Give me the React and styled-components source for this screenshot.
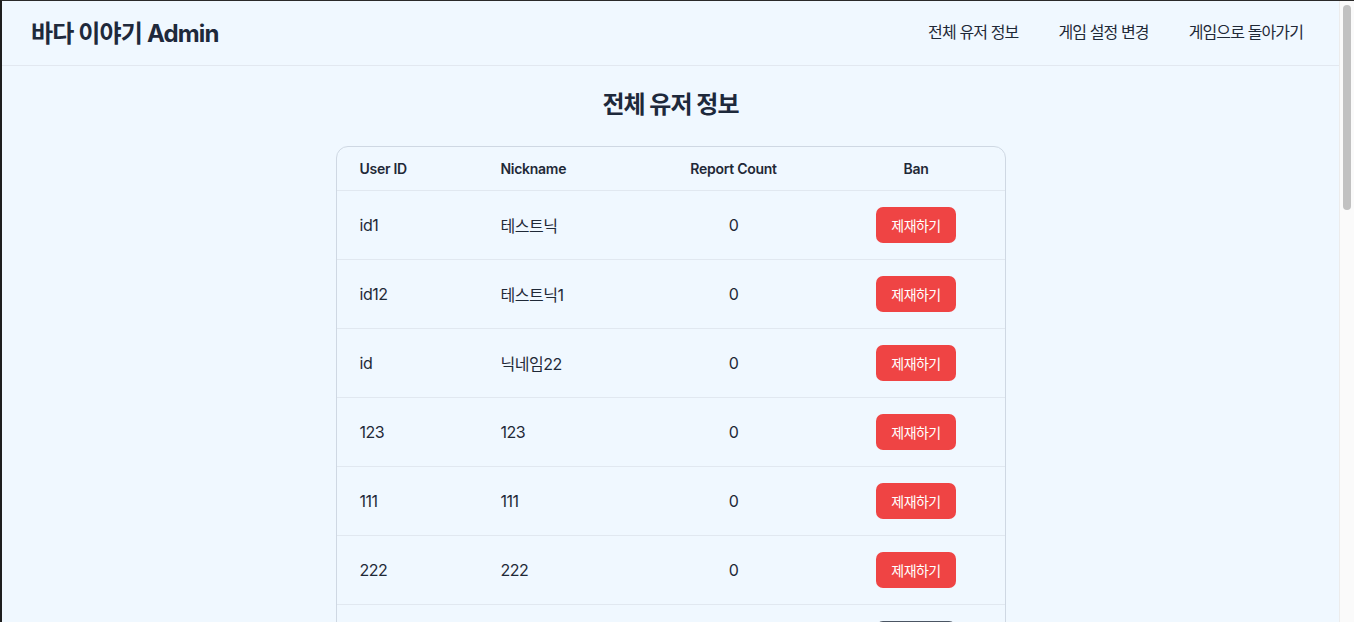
import React from "react";
import styled, { createGlobalStyle } from "styled-components";

const Global = createGlobalStyle`
  html { background: #262626; }
  body {
    margin: 0;
    border-top: 1px solid #2a2a2a;
    border-left: 2px solid #1e1e1e;
    padding-right: 15px;
    background: #f0f8ff;
    font-family: Inter, "Noto Sans CJK KR", sans-serif;
    color: #1f2937;
    overflow: hidden;
  }
  * { box-sizing: border-box; }
`;

const ScrollTrack = styled.div`
  position: fixed;
  top: 1px;
  right: 0;
  bottom: 0;
  width: 15px;
  background: #fafafa;
  border-left: 1px solid #ececec;
`;

const ScrollThumb = styled.div`
  margin: 4px 3px 0 3px;
  height: 205px;
  border-radius: 5px;
  background: #c1c1c1;
`;

const Header = styled.header`
  height: 65px;
  display: flex;
  align-items: center;
  justify-content: space-between;
  padding: 0 36px 4px 29px;
  border-bottom: 1px solid #e2e8f0;
`;

const Brand = styled.h1`
  margin: 0;
  font-size: 24px;
  font-weight: 700;
  letter-spacing: -0.035em;
  color: #1e293b;
`;

const Nav = styled.nav`
  display: flex;
  gap: 40px;
`;

const NavLink = styled.a`
  font-size: 16px;
  letter-spacing: -0.055em;
  color: #1f2937;
  text-decoration: none;
  cursor: pointer;
`;

const Main = styled.main`
  padding: 23px 0 40px;
`;

const Title = styled.h2`
  margin: 0 0 25px;
  text-align: center;
  font-size: 24px;
  font-weight: 700;
  line-height: 32px;
  letter-spacing: -0.04em;
  color: #1e293b;
`;

const Card = styled.div`
  width: 670px;
  margin: 0 auto;
  border: 1px solid #cfd8e3;
  border-radius: 12px;
  overflow: hidden;
`;

const Row = styled.div`
  display: grid;
  grid-template-columns: 141px 162px 188px 177px;
  align-items: center;
  height: ${(p) => (p.$head ? "44px" : "69px")};
  border-bottom: 1px solid #e1e8f0;
`;

const Cell = styled.div`
  padding: 0 23px;
  font-size: ${(p) => (p.$head ? "14px" : "16px")};
  font-weight: ${(p) => (p.$head ? 600 : 400)};
  letter-spacing: ${(p) => (p.$head ? "-0.02em" : "-0.03em")};
  display: flex;
  justify-content: ${(p) => (p.$center ? "center" : "flex-start")};
`;

const BanButton = styled.button`
  width: 80px;
  height: 36px;
  border: none;
  border-radius: 7px;
  background: ${(p) => (p.$banned ? "#4b5563" : "#ef4444")};
  color: #fff;
  font-family: inherit;
  font-size: 14px;
  letter-spacing: -0.04em;
  cursor: pointer;
`;

const users = [
  { id: "id1", nick: "테스트닉", count: 0 },
  { id: "id12", nick: "테스트닉1", count: 0 },
  { id: "id", nick: "닉네임22", count: 0 },
  { id: "123", nick: "123", count: 0 },
  { id: "111", nick: "111", count: 0 },
  { id: "222", nick: "222", count: 0 },
  { id: "333", nick: "333", count: 0, banned: true },
];

export default function App() {
  return (
    <>
      <Global />
      <Header>
        <Brand>바다 이야기 Admin</Brand>
        <Nav>
          <NavLink>전체 유저 정보</NavLink>
          <NavLink>게임 설정 변경</NavLink>
          <NavLink>게임으로 돌아가기</NavLink>
        </Nav>
      </Header>
      <Main>
        <Title>전체 유저 정보</Title>
        <Card>
          <Row $head>
            <Cell $head>User ID</Cell>
            <Cell $head>Nickname</Cell>
            <Cell $head $center>Report Count</Cell>
            <Cell $head $center>Ban</Cell>
          </Row>
          {users.map((u) => (
            <Row key={u.id}>
              <Cell>{u.id}</Cell>
              <Cell>{u.nick}</Cell>
              <Cell $center>{u.count}</Cell>
              <Cell $center>
                <BanButton $banned={u.banned}>
                  {u.banned ? "제재해제" : "제재하기"}
                </BanButton>
              </Cell>
            </Row>
          ))}
        </Card>
      </Main>
      <ScrollTrack>
        <ScrollThumb />
      </ScrollTrack>
    </>
  );
}
